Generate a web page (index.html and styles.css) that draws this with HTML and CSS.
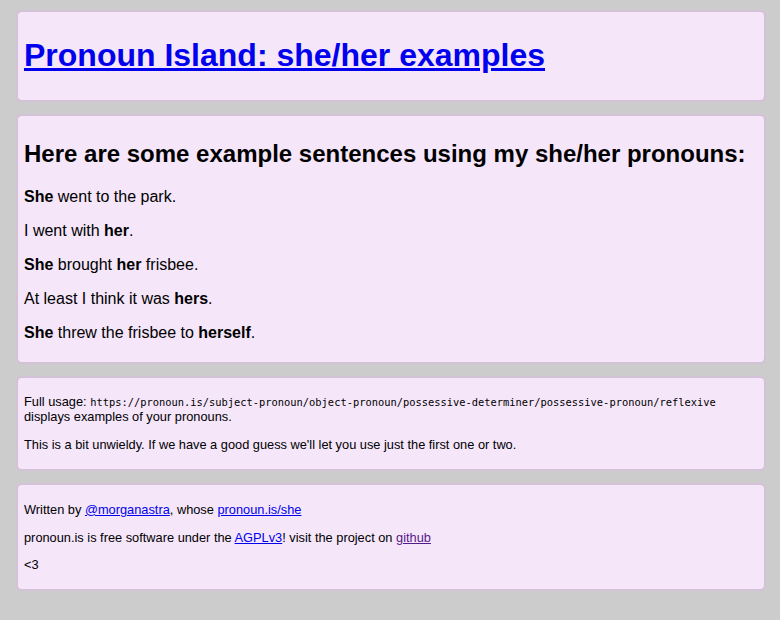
FILE: index.html
```html
<!DOCTYPE html>
<html>
<head>
<meta charset="utf-8">
<title>Pronoun Island: she/her examples</title>
<link rel="stylesheet" href="styles.css">
</head>
<body>
<div class="page">
  <div class="card">
    <h1 class="title"><a href="#">Pronoun Island: she/her examples</a></h1>
  </div>
  <div class="card">
    <h2 class="heading">Here are some example sentences using my she/her pronouns:</h2>
    <p class="sentence"><b>She</b> went to the park.</p>
    <p class="sentence">I went with <b>her</b>.</p>
    <p class="sentence"><b>She</b> brought <b>her</b> frisbee.</p>
    <p class="sentence">At least I think it was <b>hers</b>.</p>
    <p class="sentence"><b>She</b> threw the frisbee to <b>herself</b>.</p>
  </div>
  <div class="card small">
    <p>Full usage: <code class="url">https://pronoun.is/subject-pronoun/object-pronoun/possessive-determiner/possessive-pronoun/reflexive</code> displays examples of your pronouns.</p>
    <p>This is a bit unwieldy. If we have a good guess we'll let you use just the first one or two.</p>
  </div>
  <div class="card small">
    <p>Written by <a href="#">@morganastra</a>, whose <a href="#">pronoun.is/she</a></p>
    <p>pronoun.is is free software under the <a href="#">AGPLv3</a>! visit the project on <a class="visited" href="#">github</a></p>
    <p>&lt;3</p>
  </div>
</div>
</body>
</html>
```
FILE: styles.css
```css
html, body {
  margin: 0;
  background: #cccccc;
}
body {
  font-family: "Liberation Sans", Arial, sans-serif;
  color: #000;
}
.page {
  display: flex;
  flex-direction: column;
  gap: 16px;
  padding: 12px 16px 12px 18px;
}
.card {
  background: #f5e6fa;
  border-radius: 4px;
  box-shadow: 0 0 1px 2px #d5c1d7;
  padding: 4px 6px;
  display: flow-root;
}
.title {
  font-size: 32px;
  margin: 21.44px 0;
}
a {
  color: #0000ee;
}
a.visited {
  color: #551a8b;
}
.heading {
  font-size: 24px;
  margin: 19.92px 0;
}
.sentence {
  font-size: 16px;
  margin: 16px 0;
}
.small {
  font-size: 12.8px;
}
.small p {
  margin: 12.8px 0;
}
.url {
  font-family: "DejaVu Sans Mono", monospace;
  font-size: 10.4px;
}
```
